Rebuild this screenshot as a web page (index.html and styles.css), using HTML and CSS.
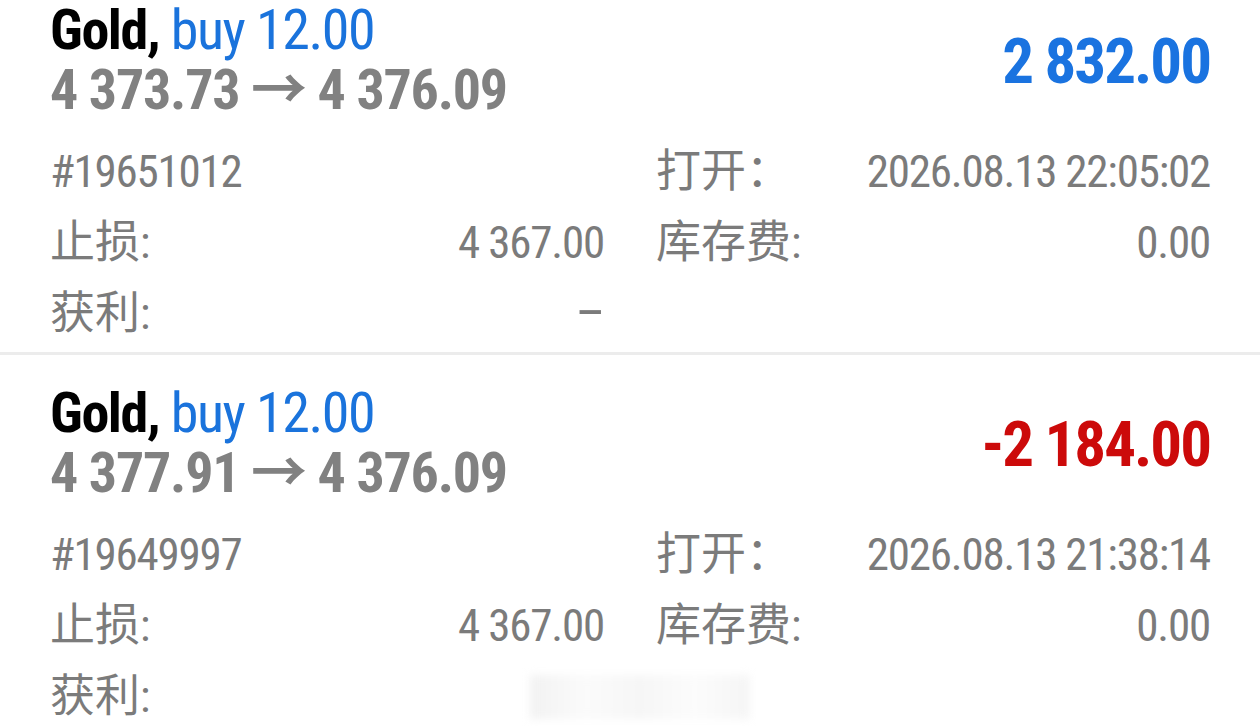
FILE: index.html
```html
<!DOCTYPE html>
<html>
  <head>
    <meta charset="utf-8">
    <link rel="stylesheet" href="styles.css">
  </head>
  <body>
    <div class="list">
      <div class="order">
        <div class="head">
          <div class="title">
            <div class="line"><span class="sym">Gold,</span> <span class="side">buy 12.00</span></div>
            <div class="line price">4 373.73 → 4 376.09</div>
          </div>
          <div class="profit up">2 832.00</div>
        </div>
        <div class="rows">
          <div class="half"><span class="num">#19651012</span></div>
          <div class="half"><span>打开：</span><span class="num">2026.08.13 22:05:02</span></div>
          <div class="half"><span>止损:</span><span class="num">4 367.00</span></div>
          <div class="half"><span>库存费:</span><span class="num">0.00</span></div>
          <div class="half"><span>获利:</span><span class="num dash">–</span></div>
          <div class="half"></div>
        </div>
      </div>
      <div class="order">
        <div class="head">
          <div class="title">
            <div class="line"><span class="sym">Gold,</span> <span class="side">buy 12.00</span></div>
            <div class="line price">4 377.91 → 4 376.09</div>
          </div>
          <div class="profit down">-2 184.00</div>
        </div>
        <div class="rows">
          <div class="half"><span class="num">#19649997</span></div>
          <div class="half"><span>打开：</span><span class="num">2026.08.13 21:38:14</span></div>
          <div class="half"><span>止损:</span><span class="num">4 367.00</span></div>
          <div class="half"><span>库存费:</span><span class="num">0.00</span></div>
          <div class="half"><span>获利:</span><span class="blur"></span></div>
          <div class="half"></div>
        </div>
      </div>
    </div>
  </body>
</html>
```

FILE: styles.css
```css
body {
  margin: 0;
  background: #fff;
  font-family: Roboto, "Noto Sans CJK SC", sans-serif;
  overflow: hidden;
}

.order {
  padding: 28px 50px 3px;
  border-bottom: 3px solid #ececec;
}
.order:first-child {
  padding-top: 0;
}

.head {
  display: flex;
  justify-content: space-between;
  align-items: flex-start;
}
.line {
  font-size: 56px;
  line-height: 60px;
  font-stretch: 75%;
  letter-spacing: -1.4px;
  white-space: nowrap;
}
.sym {
  font-weight: 700;
  color: #000;
}
.side {
  color: #1a73dc;
}
.price {
  font-weight: 700;
  color: #818181;
  letter-spacing: -1.2px;
}
.profit {
  font-size: 63px;
  line-height: 70px;
  font-weight: 700;
  font-stretch: 75%;
  letter-spacing: -2px;
  padding-top: 27px;
}
.up {
  color: #1a73e0;
}
.down {
  color: #cc0a0a;
}

.rows {
  display: grid;
  grid-template-columns: 1fr 1fr;
  column-gap: 52px;
  margin-top: 16px;
  font-size: 45px;
  line-height: 71px;
  color: #7b7b7b;
}
.half {
  display: flex;
  justify-content: space-between;
  height: 71px;
  position: relative;
}
.num {
  font-stretch: 75%;
  letter-spacing: -1.2px;
}
.dash {
  font-size: 52px;
}
.blur {
  position: absolute;
  left: 480px;
  top: 14px;
  width: 220px;
  height: 44px;
  background: linear-gradient(90deg, #f2f2f2, #fbfbfb 25%, #f6f6f6 50%, #fcfcfc 75%, #f5f5f5);
  filter: blur(4px);
}
```
